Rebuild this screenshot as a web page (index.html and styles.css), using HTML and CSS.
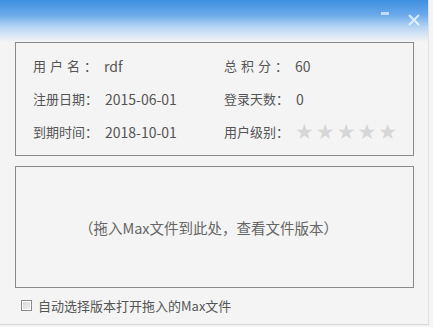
FILE: index.html
```html
<!DOCTYPE html>
<html lang="zh-CN">
<head>
    <meta charset="UTF-8">
    <title>Max版本查看</title>
    <link rel="stylesheet" href="styles.css">
</head>
<body>
    <div class="window">
        <div class="titlebar">
            <span class="btn-min"></span>
            <span class="btn-close">
                <svg width="12" height="12" viewBox="0 0 12 12"><path d="M1 1L11 11M11 1L1 11" stroke="#ffffff" stroke-width="2.2" stroke-opacity="0.7"/></svg>
            </span>
        </div>

        <div class="info-box">
            <div class="info-row">
                <div class="cell"><span class="label spaced">用户名：</span><span class="value">rdf</span></div>
                <div class="cell"><span class="label spaced">总积分：</span><span class="value">60</span></div>
            </div>
            <div class="info-row">
                <div class="cell"><span class="label">注册日期：</span><span class="value">2015-06-01</span></div>
                <div class="cell"><span class="label">登录天数：</span><span class="value">0</span></div>
            </div>
            <div class="info-row">
                <div class="cell"><span class="label">到期时间：</span><span class="value">2018-10-01</span></div>
                <div class="cell"><span class="label">用户级别：</span><span class="stars">★★★★★</span></div>
            </div>
        </div>

        <div class="drop-box">（拖入Max文件到此处，查看文件版本）</div>

        <label class="auto-open">
            <span class="checkbox"></span>
            自动选择版本打开拖入的Max文件
        </label>
    </div>
</body>
</html>
```

FILE: styles.css
```css
* {
    box-sizing: border-box;
}

body {
    margin: 0;
    background: #f4f4f4;
    font-family: "Noto Sans CJK SC", "Noto Sans", sans-serif;
    color: #555;
}

.window {
    width: 429px;
    height: 325px;
    background: #f4f4f4;
    border-right: 1px solid #e2e2e2;
    border-bottom: 1px solid #d4d4d4;
}

.titlebar {
    height: 42px;
    background: linear-gradient(to bottom, #3d8fe0 0%, #6aa9ea 35%, #b7d5f4 65%, #f4f4f4 100%);
    display: flex;
    justify-content: flex-end;
    align-items: flex-start;
    padding: 7px 8px 0 0;
    gap: 19px;
}

.btn-min {
    width: 8px;
    height: 3px;
    margin-top: 5px;
    background: rgba(255, 255, 255, 0.6);
}

.btn-close {
    display: block;
    height: 12px;
}

.info-box {
    margin: 0 14px 0 15px;
    height: 114px;
    border: 1px solid #8a8a8a;
    padding: 12px 0 0 17px;
    display: flex;
    flex-direction: column;
    gap: 12px;
}

.info-row {
    display: flex;
    height: 21px;
    align-items: center;
    font-size: 13px;
}

.cell {
    display: flex;
    align-items: center;
}

.cell:first-child {
    width: 191px;
}

.label {
    margin-right: 7px;
}

.spaced {
    letter-spacing: 4px;
    margin-right: 3px;
}

.value {
    font-size: 14px;
}

.stars {
    color: #d6d6d6;
    font-size: 21px;
    letter-spacing: 2px;
    margin-left: -1px;
    font-family: "DejaVu Sans", sans-serif;
}

.drop-box {
    margin: 10px 14px 0 15px;
    height: 122px;
    border: 1px solid #8a8a8a;
    display: flex;
    align-items: center;
    justify-content: center;
    padding-right: 12px;
    font-size: 14.5px;
    color: #666;
}

.auto-open {
    display: flex;
    align-items: center;
    gap: 6px;
    margin: 8px 0 0 21px;
    font-size: 13px;
    color: #555;
}

.checkbox {
    width: 11px;
    height: 11px;
    border: 1px solid #8a8a8a;
    background: linear-gradient(135deg, #d8d8d8, #f0f0f0);
    box-shadow: inset 0 0 0 1px #fff;
}
```
